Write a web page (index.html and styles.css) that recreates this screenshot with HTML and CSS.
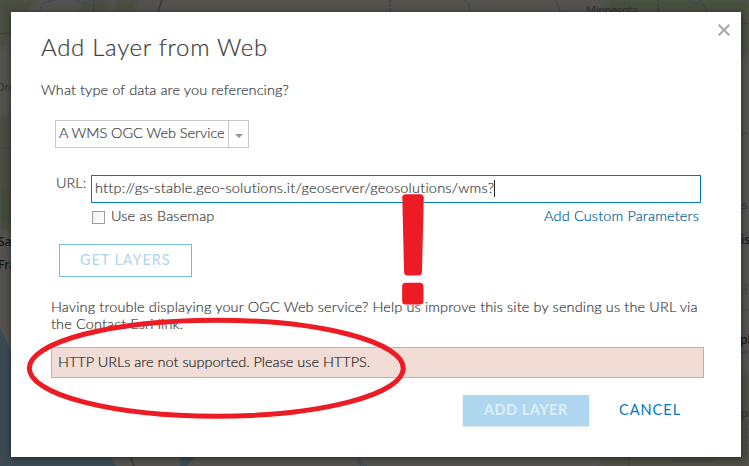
FILE: index.html
```html
<!DOCTYPE html>
<html lang="en">
<head>
<meta charset="utf-8">
<title>Add Layer from Web</title>
<link rel="stylesheet" href="styles.css">
</head>
<body>
<svg class="map" viewBox="0 0 749 466" aria-hidden="true">
  <defs><filter id="soft"><feGaussianBlur stdDeviation="2"/></filter></defs>
  <rect width="749" height="466" fill="#53524f"/>
  <g filter="url(#soft)">
    <path d="M0 0H36L25 14 12 16 8 45 0 48ZM82 0h28l-5 12H78ZM118 0h22l-8 12h-18Z" fill="#484e40"/>
    <path d="M0 115h12v115H0Z" fill="#484b43"/>
    <path d="M0 187l8 9 2 24-10 5Z" fill="#424a3e"/>
    <path d="M610 0h139v52l-10 8V12H605Z" fill="#474f3e"/>
    <path d="M739 375h10v91H600v-10h139Z" fill="#4b4e43"/>
  </g>
  <path d="M0 328l6 12 5 14v103h100l5 9H0Z" fill="#3b4a52"/>
  <path d="M180 456h16l-9 10h-7Z" fill="#3b4a52"/>
  <g fill="none" stroke="#394b5b">
    <path d="M55 0l-12 3-4 9M76 0l4 3h7l5-3M464 0l5 4 1 8M688 1l8 2 7-3"/>
  </g>
  <path d="M162 0l-4 12M130 456l4 10" fill="none" stroke="#3d3d3a" stroke-width="2"/>
  <g fill="none" stroke="#3d3c42" stroke-dasharray="3 1">
    <path d="M94 0v12M390 0v12M555 0l6 12M658 0v12M703 4l5 8M0 34l11-2M0 148h11M741 23l8 1M741 133h8M741 310h8M741 352h8M741 294h5v-9h3M629 457v9M673 461h43M746 420v37"/>
  </g>
  <g class="map-labels">
    <text x="586" y="13.5" textLength="52">Minnesota</text>
    <text x="-4" y="91">Ore</text>
    <text x="742" y="209">s</text>
    <text x="741" y="417">pi</text>
    <g class="map-city">
      <text x="-2" y="246">Sac</text>
      <text x="-2" y="269">Fran</text>
      <text x="741" y="244">is</text>
      <text x="740" y="344">ph</text>
    </g>
    <text x="355" y="463" class="map-river" transform="rotate(30 355 463)">Rio</text>
  </g>
</svg>

<main class="dialog">
  <svg class="close" viewBox="0 0 12 12"><path d="M.7.7l10.6 10.6M11.3.7L.7 11.3"/></svg>
  <h1 class="title">Add Layer from Web</h1>
  <p class="question">What type of data are you referencing?</p>
  <div class="select">
    <span class="select-value">A WMS OGC Web Service</span>
    <span class="select-arrow"></span>
  </div>
  <div class="url-row">
    <label class="url-label">URL:</label>
    <div class="url-input"><span class="url-text">http://gs-stable.geo-solutions.it/geoserver/geosolutions/wms?</span><span class="caret"></span></div>
  </div>
  <div class="options">
    <span class="checkbox"></span>
    <span class="basemap">Use as Basemap</span>
    <a class="custom">Add Custom Parameters</a>
  </div>
  <div class="get-layers"><span>GET LAYERS</span></div>
  <p class="help">Having trouble displaying your OGC Web service? Help us improve this site by sending us the URL via<br>the Contact Esri link.</p>
  <div class="error"><span>HTTP URLs are not supported. Please use HTTPS.</span></div>
  <div class="actions">
    <div class="add">ADD LAYER</div>
    <div class="cancel">CANCEL</div>
  </div>
</main>

<svg class="marks" viewBox="0 0 749 466" aria-hidden="true">
  <ellipse class="ring" cx="216.3" cy="368.2" rx="187" ry="48"/>
  <text class="bang" x="413" y="300.5" text-anchor="middle">!</text>
</svg>
</body>
</html>
```
FILE: styles.css
```css
* { box-sizing: border-box; }
body {
  margin: 0;
  width: 749px;
  height: 466px;
  overflow: hidden;
  position: relative;
  padding: 12px 8px 9px 11px;
  background: #53524f;
  color: #404040;
  font: 300 14.5px/20px Lato, "Open Sans", sans-serif;
  font-variant-ligatures: none;
  white-space: nowrap;
}
.map, .marks { position: absolute; left: 0; top: 0; width: 749px; height: 466px; }
.map-labels { font: 11px "Noto Sans", sans-serif; fill: #30302f; }
.map-city { font-size: 12px; font-weight: 500; fill: #151515; }
.map-river { font-size: 8px; fill: #2d4856; }
.dialog {
  position: relative;
  width: 730px;
  height: 445px;
  padding: 20px 37px 0 30px;
  background: #fff;
  box-shadow: 0 1px 6px rgba(0, 0, 0, .55);
  -webkit-text-stroke: .2px;
}
.close {
  position: absolute;
  right: 11px;
  top: 12px;
  width: 12px;
  height: 12px;
  fill: none;
  stroke: #a9a9a9;
  stroke-width: 2;
}
.title { margin: 0; font-size: 24px; line-height: 30px; font-weight: 300; letter-spacing: .7px; }
.question { margin: 18px 0 0; letter-spacing: .1px; }
.select { display: flex; width: 194px; height: 28px; margin: 20px 0 0 14px; border: 1px solid #c8c8c8; }
.select-value { width: 173px; padding: 2px 0 0 3px; border-right: 1px solid #c8c8c8; letter-spacing: -.04px; }
.select-arrow { margin: 13px 0 0 6px; width: 8px; height: 4px; background: #949494; clip-path: polygon(0 0, 100% 0, 50% 100%); }
.url-row { display: flex; margin: 24px 0 0 15px; height: 31px; }
.url-label { width: 35px; padding-top: 1px; }
.url-input { display: flex; width: 610px; height: 28px; margin-top: 3px; padding: 2px 3px; border: 1px solid #0079c1; letter-spacing: .22px; }
.caret { width: 1px; height: 17px; margin-top: 2px; background: #222; }
.options { display: flex; width: 610px; height: 20px; margin: 3px 0 0 50px; letter-spacing: .15px; }
.checkbox { width: 13px; height: 13px; margin: 5px 6px 0 1px; border: 1px solid #9c9c9c; background: linear-gradient(135deg, #eee, #fff); }
.custom { margin-left: auto; margin-right: 2px; color: #005e95; }
.get-layers { width: 133px; height: 33px; margin: 18px 0 0 18px; padding: 5px 0 0 20px; border: 1px solid #7ab8dc; color: #aed6ee; font-weight: 400; letter-spacing: .9px; -webkit-text-stroke: 0; }
.help { margin: 21px 0 0 10px; line-height: 17px; letter-spacing: .13px; }
.error { width: 653px; height: 31px; margin: 15px 0 0 10px; padding: 4px 6px; border: 1px solid #e3a393; background: #f2ddd6; color: #282828; }
.actions { display: flex; margin: 17px 0 0 422px; }
.add { width: 126px; height: 31px; padding: 5px 0 0 21px; background: #aed6ee; box-shadow: 0 1px 2px rgba(0, 0, 0, .12); color: #dceef9; font-weight: 700; letter-spacing: .5px; -webkit-text-stroke: 0; }
.cancel { margin-left: 30px; padding-top: 5px; color: #0079c1; font-weight: 400; letter-spacing: 1px; -webkit-text-stroke: 0; }
.ring { fill: none; stroke: #ed1c24; stroke-width: 5; }
.bang { font-family: "Liberation Sans", sans-serif; font-size: 151px; font-weight: 400; fill: #ed1c24; stroke: #ed1c24; stroke-width: 7; stroke-linejoin: round; }
```
